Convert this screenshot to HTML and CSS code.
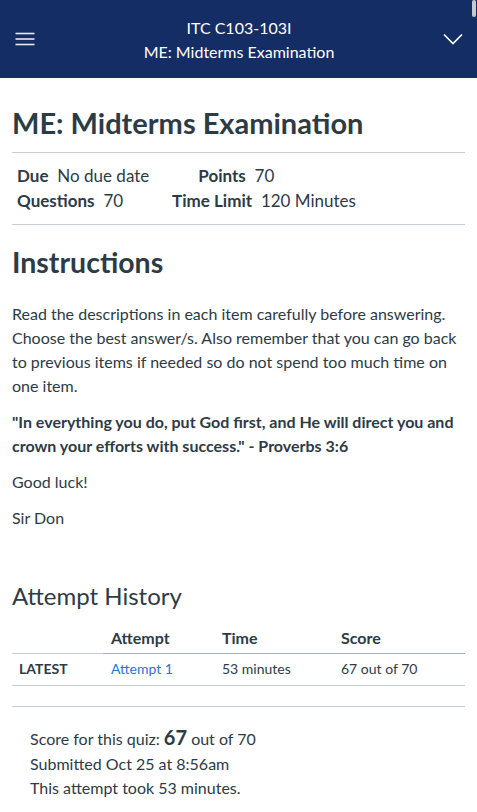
FILE: index.html
```html
<!DOCTYPE html>
<html lang="en">
<head>
<meta charset="utf-8">
<title>ME: Midterms Examination</title>
<link rel="stylesheet" href="styles.css">
</head>
<body>
<header class="topbar">
  <button class="icon-btn" aria-label="Menu">
    <svg width="20" height="14" viewBox="0 0 20 14"><g stroke="#e6e9f0" stroke-width="1.6"><line x1="0.5" y1="1.5" x2="19.5" y2="1.5"/><line x1="0.5" y1="7" x2="19.5" y2="7"/><line x1="0.5" y1="12.5" x2="19.5" y2="12.5"/></g></svg>
  </button>
  <div class="topbar-title">
    <div>ITC C103-103I</div>
    <div>ME: Midterms Examination</div>
  </div>
  <button class="icon-btn" aria-label="Expand">
    <svg width="20" height="12" viewBox="0 0 20 12"><polyline points="1,1.5 10,10.5 19,1.5" fill="none" stroke="#ffffff" stroke-width="1.6"/></svg>
  </button>
</header>
<div class="scroll-thumb"></div>
<main class="content">
  <h1 class="quiz-title">ME: Midterms Examination</h1>
  <div class="details">
    <div class="details-row">
      <div class="detail"><span class="label">Due</span> No due date</div>
      <div class="detail"><span class="label">Points</span> 70</div>
    </div>
    <div class="details-row">
      <div class="detail"><span class="label">Questions</span> 70</div>
      <div class="detail"><span class="label">Time Limit</span> 120 Minutes</div>
    </div>
  </div>
  <h2 class="section-title">Instructions</h2>
  <div class="description">
    <p>Read the descriptions in each item carefully before answering. Choose the best answer/s. Also remember that you can go back to previous items if needed so do not spend too much time on one item.</p>
    <p><strong>"In everything you do, put God first, and He will direct you and crown your efforts with success." - Proverbs 3:6</strong></p>
    <p>Good luck!</p>
    <p>Sir Don</p>
  </div>
  <h2 class="history-title">Attempt History</h2>
  <table class="history">
    <thead>
      <tr><th class="c1"></th><th class="c2">Attempt</th><th class="c3">Time</th><th class="c4">Score</th></tr>
    </thead>
    <tbody>
      <tr><td class="latest">LATEST</td><td><a href="#">Attempt 1</a></td><td>53 minutes</td><td>67 out of 70</td></tr>
    </tbody>
  </table>
  <div class="summary">
    <div>Score for this quiz: <strong class="big">67</strong> out of 70</div>
    <div>Submitted Oct 25 at 8:56am</div>
    <div>This attempt took 53 minutes.</div>
  </div>
</main>
</body>
</html>
```
FILE: styles.css
```css
* { box-sizing: border-box; }
html, body { margin: 0; padding: 0; }
body {
  font-family: Lato, "Open Sans", sans-serif;
  color: #2d3b45;
  background: #ffffff;
  font-size: 16px;
  line-height: 24px;
}
.topbar {
  height: 78px;
  background: #142d64;
  color: #ffffff;
  display: flex;
  align-items: center;
  justify-content: space-between;
  padding: 0 14px 0 15px;
}
.icon-btn {
  background: none;
  border: 0;
  padding: 0;
  width: 20px;
  display: flex;
  align-items: center;
  justify-content: center;
}
.topbar-title {
  text-align: center;
  font-size: 16px;
  line-height: 24px;
  padding-top: 1px;
}
.scroll-thumb {
  position: absolute;
  top: 0;
  right: 1px;
  width: 4px;
  height: 17px;
  border-radius: 2px;
  background: #c9c9c9;
}
.content { padding: 0 12px; }
.quiz-title {
  font-size: 29px;
  line-height: 35px;
  font-weight: 700;
  margin: 27px 0 0;
  padding-bottom: 12px;
  border-bottom: 1px solid #c7cdd1;
}
.details {
  padding: 10px 0 11px 5px;
  border-bottom: 1px solid #c7cdd1;
  font-size: 17px;
  line-height: 25px;
}
.details-row { display: flex; column-gap: 49px; }
.label { font-weight: 700; margin-right: 4.5px; }
.section-title {
  font-size: 28.5px;
  line-height: 32px;
  font-weight: 700;
  margin: 21px 0 24px;
}
.description p { margin: 0 0 12px; }
.description strong { font-weight: 700; }
.history-title {
  font-size: 24px;
  line-height: 30px;
  font-weight: 400;
  margin: 51px 0 15px;
}
.history {
  width: 100%;
  border-collapse: collapse;
  font-size: 14px;
}
.history th {
  text-align: left;
  font-size: 16px;
  font-weight: 700;
  padding: 0 8px 3px;
  line-height: 24px;
  border-bottom: 1px solid #a5b0b7;
}
.history th.c1 { width: 91px; border-bottom-color: #c7cdd1; }
.history th.c2 { width: 111px; }
.history th.c3 { width: 119px; }
.history td {
  padding: 5px 8px 6px;
  line-height: 20px;
  border-bottom: 1px solid #c7cdd1;
}
.history td.latest { font-weight: 700; padding-left: 7px; }
.history a { color: #2d72d9; text-decoration: none; }
.summary {
  margin-top: 20px;
  border-top: 1px solid #c7cdd1;
  padding: 18px 18px 0;
  line-height: 24.5px;
}
.big { font-size: 20px; font-weight: 700; }
```
